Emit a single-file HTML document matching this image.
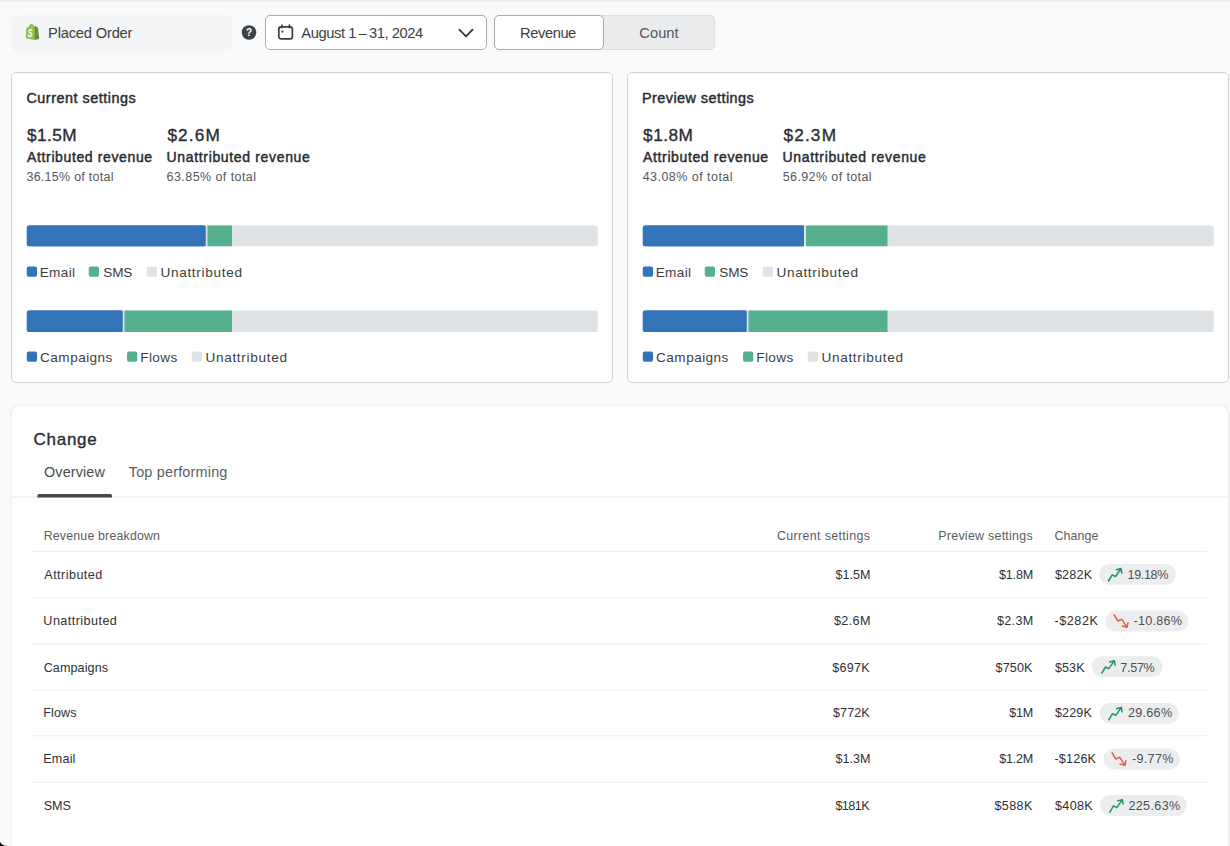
<!DOCTYPE html>
<html lang="en">
<head>
<meta charset="utf-8">
<title>Attribution settings preview</title>
<style>
*{box-sizing:border-box;margin:0;padding:0}
html,body{width:1230px;height:846px;overflow:hidden}
body{background:#f9fafb;font-family:"Liberation Sans",Arial,sans-serif;color:#2b2d30;position:relative}
.abs{position:absolute}
.t{position:absolute;white-space:pre;line-height:20px;height:20px}
.topline{left:0;top:0;width:1230px;height:2px;background:linear-gradient(#e9ebed 0,#e9ebed 1px,#f3f4f6 1px,#f3f4f6 2px)}
.chip{left:12px;top:15px;width:220px;height:37px;background:#f3f5f6;border-radius:6px}
.date{left:265px;top:15px;width:221.5px;height:35px;background:#fff;border:1px solid #a9abad;border-radius:5px}
.seg{left:494px;top:15px;width:221px;height:35px;background:#e9ebec;border:1px solid #dcdee0;border-radius:5px}
.segon{left:494px;top:15px;width:110px;height:35px;background:#fff;border:1px solid #a9abad;border-radius:5px}
.card{top:72px;width:602px;height:311px;background:#fff;border:1px solid #cfd2d5;border-radius:5px}
.change{left:12px;top:406px;width:1216px;height:460px;background:#fff;border-radius:7px;box-shadow:0 0 3px rgba(0,0,0,.13)}
</style>
</head>
<body>
<div class="abs topline"></div>
<div class="abs chip"></div>
<svg class="abs" style="left:24px;top:23px" width="18" height="18" viewBox="0 0 18 18"><path d="M2.3 4.9 L4.6 3.9 C5.2 2 6.2 1.1 7.4 1.1 C8.6 1.1 9.6 2 10.3 3.2 L10.3 16.9 L1.6 15.2 Z" fill="#95bf47"/><path d="M10.3 3.2 L12 3.3 L13.9 4.8 L15.2 15.9 L10.3 16.9 Z" fill="#5e8e3e"/><text x="3.7" y="14.3" textLength="4.8" lengthAdjust="spacingAndGlyphs" font-family="Liberation Sans, sans-serif" font-size="10.4" font-weight="700" font-style="italic" fill="#fff">S</text></svg>
<svg class="abs" style="left:241px;top:24px" width="16" height="16" viewBox="0 0 16 16"><circle cx="8" cy="8.5" r="7.3" fill="#3f4144"/><text x="8" y="12.1" text-anchor="middle" font-family="Liberation Sans, sans-serif" font-size="10" font-weight="700" fill="#fff">?</text></svg>
<div class="abs date"></div>
<svg class="abs" style="left:277px;top:23px" width="18" height="18" viewBox="0 0 18 18"><rect x="1.8" y="3.8" width="13.6" height="12" rx="2.4" fill="none" stroke="#3a3c3f" stroke-width="1.7"/><path d="M5 2 V4.6 M12.4 2 V4.6" stroke="#3a3c3f" stroke-width="1.6" stroke-linecap="round"/><circle cx="5.4" cy="8.6" r="1.1" fill="#3a3c3f"/></svg>
<svg class="abs" style="left:455.5px;top:25.5px" width="20" height="14" viewBox="0 0 20 14"><path d="M3.4 3.7 L10 10.4 L16.6 3.7" fill="none" stroke="#333538" stroke-width="1.8" stroke-linecap="round" stroke-linejoin="round"/></svg>
<div class="abs seg"></div><div class="abs segon"></div>
<div class="abs card" style="left:11px"></div>
<div class="abs card" style="left:627px"></div>
<div class="abs change"></div>
<svg class="abs" style="left:0;top:0" width="1230" height="846" viewBox="0 0 1230 846">
<rect x="26.75" y="225.50" width="571.05" height="20.75" fill="#e0e3e5" rx="2"/>
<rect x="207.50" y="225.50" width="24.50" height="20.75" fill="#56b08e"/>
<rect x="26.75" y="225.50" width="178.75" height="20.75" fill="#3273ba" rx="2"/>
<rect x="29.75" y="225.50" width="175.75" height="20.75" fill="#3273ba"/>
<rect x="26.75" y="310.50" width="571.05" height="21.50" fill="#e0e3e5" rx="2"/>
<rect x="124.50" y="310.50" width="107.50" height="21.50" fill="#56b08e"/>
<rect x="26.75" y="310.50" width="95.75" height="21.50" fill="#3273ba" rx="2"/>
<rect x="29.75" y="310.50" width="92.75" height="21.50" fill="#3273ba"/>
<rect x="26.75" y="266.50" width="10.30" height="10.30" fill="#3273ba" rx="2"/>
<rect x="88.75" y="266.50" width="10.30" height="10.30" fill="#56b08e" rx="2"/>
<rect x="146.75" y="266.50" width="10.30" height="10.30" fill="#e0e3e5" rx="2"/>
<rect x="26.75" y="351.40" width="10.30" height="10.30" fill="#3273ba" rx="2"/>
<rect x="127.00" y="351.40" width="10.30" height="10.30" fill="#56b08e" rx="2"/>
<rect x="191.75" y="351.40" width="10.30" height="10.30" fill="#e0e3e5" rx="2"/>
<rect x="642.75" y="225.50" width="571.05" height="20.75" fill="#e0e3e5" rx="2"/>
<rect x="806.00" y="225.50" width="81.50" height="20.75" fill="#56b08e"/>
<rect x="642.75" y="225.50" width="161.25" height="20.75" fill="#3273ba" rx="2"/>
<rect x="645.75" y="225.50" width="158.25" height="20.75" fill="#3273ba"/>
<rect x="642.75" y="310.50" width="571.05" height="21.50" fill="#e0e3e5" rx="2"/>
<rect x="748.50" y="310.50" width="139.00" height="21.50" fill="#56b08e"/>
<rect x="642.75" y="310.50" width="103.75" height="21.50" fill="#3273ba" rx="2"/>
<rect x="645.75" y="310.50" width="100.75" height="21.50" fill="#3273ba"/>
<rect x="642.75" y="266.50" width="10.30" height="10.30" fill="#3273ba" rx="2"/>
<rect x="704.75" y="266.50" width="10.30" height="10.30" fill="#56b08e" rx="2"/>
<rect x="762.75" y="266.50" width="10.30" height="10.30" fill="#e0e3e5" rx="2"/>
<rect x="642.75" y="351.40" width="10.30" height="10.30" fill="#3273ba" rx="2"/>
<rect x="743.00" y="351.40" width="10.30" height="10.30" fill="#56b08e" rx="2"/>
<rect x="807.75" y="351.40" width="10.30" height="10.30" fill="#e0e3e5" rx="2"/>
<rect x="12.00" y="496.50" width="1216.00" height="1.00" fill="#e6e8ea"/>
<path d="M37.4 497.4 V495.7 Q37.4 494 39.1 494 H110.3 Q112 494 112 495.7 V497.4 Z" fill="#46484b"/>
<rect x="32.00" y="550.90" width="1175.50" height="1.00" fill="#ebedef"/>
<rect x="32.00" y="597.30" width="1175.50" height="1.00" fill="#ebedef"/>
<rect x="32.00" y="643.70" width="1175.50" height="1.00" fill="#ebedef"/>
<rect x="32.00" y="689.50" width="1175.50" height="1.00" fill="#ebedef"/>
<rect x="32.00" y="735.30" width="1175.50" height="1.00" fill="#ebedef"/>
<rect x="32.00" y="781.70" width="1175.50" height="1.00" fill="#ebedef"/>
<rect x="1099.20" y="564.00" width="76.80" height="20.80" fill="#ebedee" rx="10.4"/>
<path transform="translate(1108.5,581.0)" d="M0 0 L3.7 -6.2 L7 -4.5 L12.5 -12.5 M7.9 -11.2 L12.5 -12.5 L13.3 -8" fill="none" stroke="#1f946c" stroke-width="1.5" stroke-linecap="round" stroke-linejoin="round"/>
<rect x="1105.00" y="610.60" width="83.30" height="20.80" fill="#ebedee" rx="10.4"/>
<path transform="translate(1114.2,614.8)" d="M0 0 L3.7 6.2 L7.7 4.5 L12.8 12.5 M8 11.3 L12.8 12.5 L13.8 7.9" fill="none" stroke="#e0604f" stroke-width="1.5" stroke-linecap="round" stroke-linejoin="round"/>
<rect x="1092.00" y="656.20" width="70.70" height="20.80" fill="#ebedee" rx="10.4"/>
<path transform="translate(1101.8,673.2)" d="M0 0 L3.7 -6.2 L7 -4.5 L12.5 -12.5 M7.9 -11.2 L12.5 -12.5 L13.3 -8" fill="none" stroke="#1f946c" stroke-width="1.5" stroke-linecap="round" stroke-linejoin="round"/>
<rect x="1099.80" y="702.90" width="79.10" height="20.80" fill="#ebedee" rx="10.4"/>
<path transform="translate(1108.8,719.9)" d="M0 0 L3.7 -6.2 L7 -4.5 L12.5 -12.5 M7.9 -11.2 L12.5 -12.5 L13.3 -8" fill="none" stroke="#1f946c" stroke-width="1.5" stroke-linecap="round" stroke-linejoin="round"/>
<rect x="1103.30" y="748.60" width="76.50" height="20.80" fill="#ebedee" rx="10.4"/>
<path transform="translate(1112.1,752.8)" d="M0 0 L3.7 6.2 L7.7 4.5 L12.8 12.5 M8 11.3 L12.8 12.5 L13.8 7.9" fill="none" stroke="#e0604f" stroke-width="1.5" stroke-linecap="round" stroke-linejoin="round"/>
<rect x="1100.00" y="795.10" width="86.70" height="20.80" fill="#ebedee" rx="10.4"/>
<path transform="translate(1109.8,812.1)" d="M0 0 L3.7 -6.2 L7 -4.5 L12.5 -12.5 M7.9 -11.2 L12.5 -12.5 L13.3 -8" fill="none" stroke="#1f946c" stroke-width="1.5" stroke-linecap="round" stroke-linejoin="round"/>
<rect x="1228.20" y="412.00" width="1.80" height="434.00" fill="#eff0f2"/>
<path d="M0 846 V841.5 Q1.2 845.2 7 846 Z" fill="#111"/>
</svg>
<span class="t" style="left:48.05px;top:23.00px;font-size:14.7px;letter-spacing:-0.190px;color:#3c3e41">Placed Order</span>
<span class="t" style="left:301.25px;top:23.00px;font-size:14.7px;letter-spacing:-0.399px;color:#3c3e41">August 1 – 31, 2024</span>
<span class="t" style="left:520.10px;top:23.00px;font-size:14.7px;letter-spacing:-0.433px;color:#3c3e41">Revenue</span>
<span class="t" style="left:639.31px;top:23.00px;font-size:14.7px;letter-spacing:0.041px;color:#55585c">Count</span>
<span class="t" style="left:26.45px;top:88.00px;font-size:14.4px;letter-spacing:0.509px;color:#2a2c2f;-webkit-text-stroke:0.45px #2a2c2f">Current settings</span>
<span class="t" style="left:27.07px;top:125.00px;font-size:17.2px;letter-spacing:0.451px;color:#2a2c2f;-webkit-text-stroke:0.35px #2a2c2f">$1.5M</span>
<span class="t" style="left:27.12px;top:147.00px;font-size:14.0px;letter-spacing:0.624px;color:#2a2c2f;-webkit-text-stroke:0.45px #2a2c2f">Attributed revenue</span>
<span class="t" style="left:26.45px;top:167.00px;font-size:12.5px;letter-spacing:0.263px;color:#54575b">36.15% of total</span>
<span class="t" style="left:167.38px;top:125.00px;font-size:17.2px;letter-spacing:1.151px;color:#2a2c2f;-webkit-text-stroke:0.35px #2a2c2f">$2.6M</span>
<span class="t" style="left:166.55px;top:147.00px;font-size:14.0px;letter-spacing:0.660px;color:#2a2c2f;-webkit-text-stroke:0.45px #2a2c2f">Unattributed revenue</span>
<span class="t" style="left:166.60px;top:167.00px;font-size:12.5px;letter-spacing:0.431px;color:#54575b">63.85% of total</span>
<span class="t" style="left:39.69px;top:263.00px;font-size:13.6px;letter-spacing:0.363px;color:#3c3e41">Email</span>
<span class="t" style="left:103.33px;top:263.00px;font-size:13.6px;letter-spacing:-0.237px;color:#3c3e41">SMS</span>
<span class="t" style="left:160.40px;top:263.00px;font-size:13.6px;letter-spacing:0.684px;color:#3c3e41">Unattributed</span>
<span class="t" style="left:40.11px;top:348.00px;font-size:13.6px;letter-spacing:0.440px;color:#3c3e41">Campaigns</span>
<span class="t" style="left:140.19px;top:348.00px;font-size:13.6px;letter-spacing:0.431px;color:#3c3e41">Flows</span>
<span class="t" style="left:205.40px;top:348.00px;font-size:13.6px;letter-spacing:0.684px;color:#3c3e41">Unattributed</span>
<span class="t" style="left:642.00px;top:88.00px;font-size:14.4px;letter-spacing:0.459px;color:#2a2c2f;-webkit-text-stroke:0.45px #2a2c2f">Preview settings</span>
<span class="t" style="left:643.07px;top:125.00px;font-size:17.2px;letter-spacing:0.526px;color:#2a2c2f;-webkit-text-stroke:0.35px #2a2c2f">$1.8M</span>
<span class="t" style="left:643.12px;top:147.00px;font-size:14.0px;letter-spacing:0.624px;color:#2a2c2f;-webkit-text-stroke:0.45px #2a2c2f">Attributed revenue</span>
<span class="t" style="left:642.65px;top:167.00px;font-size:12.5px;letter-spacing:0.463px;color:#54575b">43.08% of total</span>
<span class="t" style="left:783.38px;top:125.00px;font-size:17.2px;letter-spacing:1.201px;color:#2a2c2f;-webkit-text-stroke:0.35px #2a2c2f">$2.3M</span>
<span class="t" style="left:782.55px;top:147.00px;font-size:14.0px;letter-spacing:0.660px;color:#2a2c2f;-webkit-text-stroke:0.45px #2a2c2f">Unattributed revenue</span>
<span class="t" style="left:782.70px;top:167.00px;font-size:12.5px;letter-spacing:0.395px;color:#54575b">56.92% of total</span>
<span class="t" style="left:655.69px;top:263.00px;font-size:13.6px;letter-spacing:0.363px;color:#3c3e41">Email</span>
<span class="t" style="left:719.33px;top:263.00px;font-size:13.6px;letter-spacing:-0.237px;color:#3c3e41">SMS</span>
<span class="t" style="left:776.40px;top:263.00px;font-size:13.6px;letter-spacing:0.684px;color:#3c3e41">Unattributed</span>
<span class="t" style="left:656.11px;top:348.00px;font-size:13.6px;letter-spacing:0.440px;color:#3c3e41">Campaigns</span>
<span class="t" style="left:756.19px;top:348.00px;font-size:13.6px;letter-spacing:0.431px;color:#3c3e41">Flows</span>
<span class="t" style="left:821.40px;top:348.00px;font-size:13.6px;letter-spacing:0.684px;color:#3c3e41">Unattributed</span>
<span class="t" style="left:33.38px;top:430.00px;font-size:17px;letter-spacing:0.777px;color:#2a2c2f;-webkit-text-stroke:0.35px #2a2c2f">Change</span>
<span class="t" style="left:44.03px;top:462.00px;font-size:14.4px;letter-spacing:0.127px;color:#4a4d50">Overview</span>
<span class="t" style="left:128.78px;top:462.00px;font-size:14.4px;letter-spacing:0.199px;color:#5a5d61">Top performing</span>
<span class="t" style="left:43.70px;top:526.00px;font-size:12.4px;letter-spacing:0.166px;color:#5a5d61">Revenue breakdown</span>
<span class="t" style="left:777.00px;top:526.00px;font-size:12.4px;letter-spacing:0.365px;color:#5a5d61">Current settings</span>
<span class="t" style="left:938.30px;top:526.00px;font-size:12.4px;letter-spacing:0.275px;color:#5a5d61">Preview settings</span>
<span class="t" style="left:1054.50px;top:526.00px;font-size:12.4px;letter-spacing:0.122px;color:#5a5d61">Change</span>
<span class="t" style="left:44.30px;top:565.00px;font-size:12.6px;letter-spacing:0.453px;color:#2f3134">Attributed</span>
<span class="t" style="left:835.60px;top:565.00px;font-size:12.6px;letter-spacing:-0.031px;color:#2f3134">$1.5M</span>
<span class="t" style="left:998.90px;top:565.00px;font-size:12.6px;letter-spacing:-0.156px;color:#2f3134">$1.8M</span>
<span class="t" style="left:1054.90px;top:565.00px;font-size:12.6px;letter-spacing:0.217px;color:#2f3134">$282K</span>
<span class="t" style="left:1127.55px;top:565.00px;font-size:12.6px;letter-spacing:-0.376px;color:#4d5054">19.18%</span>
<span class="t" style="left:43.35px;top:611.00px;font-size:12.6px;letter-spacing:0.447px;color:#2f3134">Unattributed</span>
<span class="t" style="left:833.90px;top:611.00px;font-size:12.6px;letter-spacing:0.394px;color:#2f3134">$2.6M</span>
<span class="t" style="left:996.90px;top:611.00px;font-size:12.6px;letter-spacing:0.344px;color:#2f3134">$2.3M</span>
<span class="t" style="left:1054.45px;top:611.00px;font-size:12.6px;letter-spacing:0.565px;color:#2f3134">-$282K</span>
<span class="t" style="left:1133.45px;top:611.00px;font-size:12.6px;letter-spacing:0.254px;color:#4d5054">-10.86%</span>
<span class="t" style="left:43.70px;top:658.00px;font-size:12.6px;letter-spacing:0.077px;color:#2f3134">Campaigns</span>
<span class="t" style="left:832.20px;top:658.00px;font-size:12.6px;letter-spacing:0.242px;color:#2f3134">$697K</span>
<span class="t" style="left:995.60px;top:658.00px;font-size:12.6px;letter-spacing:0.092px;color:#2f3134">$750K</span>
<span class="t" style="left:1054.90px;top:658.00px;font-size:12.6px;letter-spacing:0.092px;color:#2f3134">$53K</span>
<span class="t" style="left:1120.30px;top:658.00px;font-size:12.6px;letter-spacing:-0.306px;color:#4d5054">7.57%</span>
<span class="t" style="left:43.30px;top:703.00px;font-size:12.6px;letter-spacing:0.087px;color:#2f3134">Flows</span>
<span class="t" style="left:833.10px;top:703.00px;font-size:12.6px;letter-spacing:0.017px;color:#2f3134">$772K</span>
<span class="t" style="left:1009.30px;top:703.00px;font-size:12.6px;letter-spacing:-0.258px;color:#2f3134">$1M</span>
<span class="t" style="left:1054.90px;top:703.00px;font-size:12.6px;letter-spacing:0.142px;color:#2f3134">$229K</span>
<span class="t" style="left:1128.10px;top:703.00px;font-size:12.6px;letter-spacing:0.254px;color:#4d5054">29.66%</span>
<span class="t" style="left:43.30px;top:749.00px;font-size:12.6px;letter-spacing:0.148px;color:#2f3134">Email</span>
<span class="t" style="left:835.40px;top:749.00px;font-size:12.6px;letter-spacing:0.019px;color:#2f3134">$1.3M</span>
<span class="t" style="left:999.30px;top:749.00px;font-size:12.6px;letter-spacing:-0.256px;color:#2f3134">$1.2M</span>
<span class="t" style="left:1054.45px;top:749.00px;font-size:12.6px;letter-spacing:0.185px;color:#2f3134">-$126K</span>
<span class="t" style="left:1132.05px;top:749.00px;font-size:12.6px;letter-spacing:0.286px;color:#4d5054">-9.77%</span>
<span class="t" style="left:43.75px;top:796.00px;font-size:12.6px;letter-spacing:-0.100px;color:#2f3134">SMS</span>
<span class="t" style="left:835.40px;top:796.00px;font-size:12.6px;letter-spacing:-0.558px;color:#2f3134">$181K</span>
<span class="t" style="left:994.40px;top:796.00px;font-size:12.6px;letter-spacing:0.392px;color:#2f3134">$588K</span>
<span class="t" style="left:1054.90px;top:796.00px;font-size:12.6px;letter-spacing:0.367px;color:#2f3134">$408K</span>
<span class="t" style="left:1128.40px;top:796.00px;font-size:12.6px;letter-spacing:0.344px;color:#4d5054">225.63%</span>
</body>
</html>
